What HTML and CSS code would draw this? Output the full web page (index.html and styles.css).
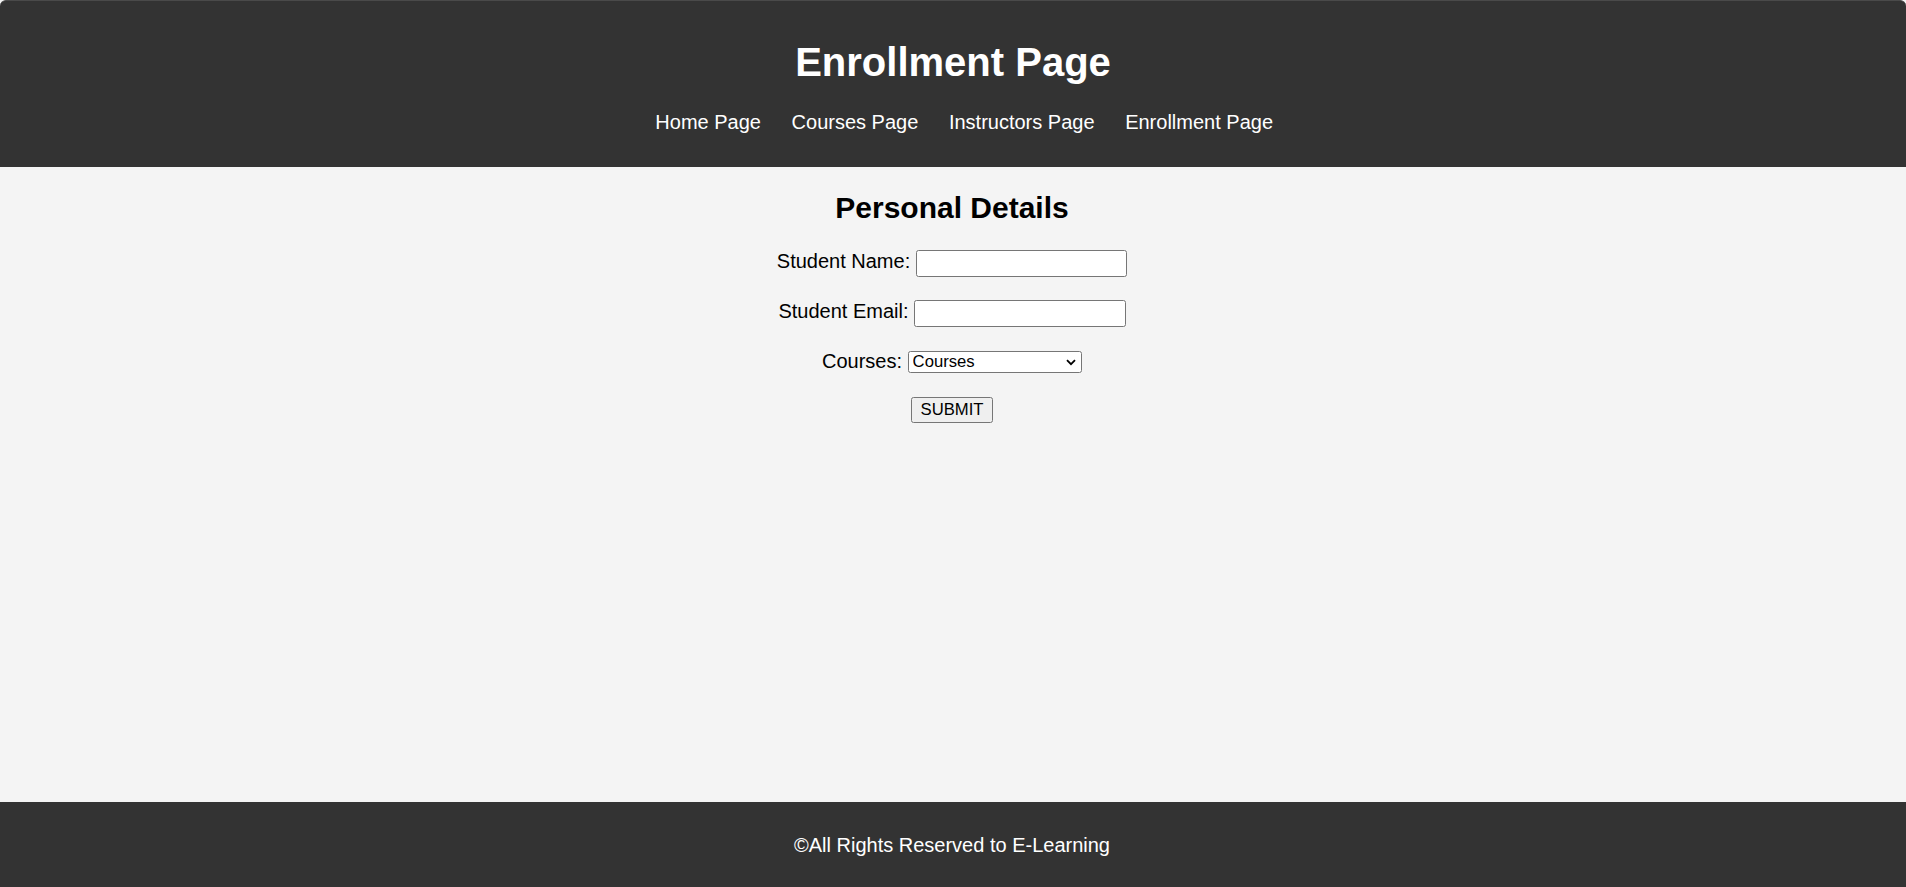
FILE: index.html
```html
<!DOCTYPE html>
<html lang="en">
<head>
<meta charset="utf-8">
<title>Enrollment Page</title>
<link rel="stylesheet" href="styles.css">
</head>
<body>
<header class="site-header">
  <h1 class="site-title">Enrollment Page</h1>
  <nav class="site-nav">
    <a class="nav-link" href="#">Home Page</a>
    <a class="nav-link" href="#">Courses Page</a>
    <a class="nav-link" href="#">Instructors Page</a>
    <a class="nav-link" href="#">Enrollment Page</a>
  </nav>
</header>
<main class="content">
  <h2 class="section-title">Personal Details</h2>
  <form class="enroll-form">
    <div class="field field-text">
      <label class="field-label" for="sname">Student Name:</label>
      <input class="text-input" id="sname" type="text">
    </div>
    <div class="field field-text">
      <label class="field-label" for="semail">Student Email:</label>
      <input class="text-input" id="semail" type="email">
    </div>
    <div class="field field-select">
      <label class="field-label" for="course">Courses:</label>
      <span class="select-wrap">
        <select class="course-select" id="course">
          <option>Courses</option>
        </select>
        <svg class="chevron" width="10" height="7" viewBox="0 0 10 7" aria-hidden="true"><path d="M1 1.2 L5 5.2 L9 1.2" fill="none" stroke="#000" stroke-width="1.8"/></svg>
      </span>
    </div>
    <button class="submit-btn" type="submit">SUBMIT</button>
  </form>
</main>
<footer class="site-footer">©All Rights Reserved to E-Learning</footer>
</body>
</html>
```

FILE: styles.css
```css
* {
  box-sizing: border-box;
}

html, body {
  margin: 0;
  padding: 0;
}

body {
  font-family: "Liberation Sans", Arial, sans-serif;
  background: #f4f4f4;
  color: #000;
  min-height: 100vh;
  display: flex;
  flex-direction: column;
}

.site-header {
  background: #333333;
  color: #fff;
  text-align: center;
  padding: 11px 0 13px;
  border-top: 1px solid #4a4a4a;
  border-radius: 6px 6px 0 0;
}

.site-title {
  margin: 27px 0 26px;
  font-size: 40px;
  line-height: 46px;
  font-weight: bold;
}

.site-nav {
  display: flex;
  justify-content: center;
  gap: 30.6px;
  padding-left: 22.4px;
  margin: 0 0 20px;
  font-size: 20px;
  line-height: 23px;
}

.nav-link {
  color: #fff;
  text-decoration: none;
}

.content {
  flex: 1;
  padding-top: 24px;
}

.section-title {
  margin: 0;
  padding-right: 2px;
  text-align: center;
  font-size: 30px;
  line-height: 34.5px;
  font-weight: bold;
}

.enroll-form {
  margin-top: 24px;
  padding-right: 2px;
  display: flex;
  flex-direction: column;
  align-items: center;
}

.field {
  display: flex;
  justify-content: center;
  align-items: flex-start;
  gap: 5.6px;
  margin-bottom: 20px;
}

.field-text {
  height: 30px;
}

.field-select {
  height: 27px;
}

.field-label {
  font-size: 20px;
  line-height: 23px;
}

.text-input {
  width: 211.4px;
  height: 26.7px;
  margin-top: 0.7px;
  border: 1px solid #767676;
  border-radius: 2.5px;
  background: #fff;
  padding: 0 3px;
  font-family: "Liberation Sans", Arial, sans-serif;
  font-size: 16.67px;
}

.select-wrap {
  position: relative;
  display: block;
  margin-top: 1.5px;
  height: 22px;
}

.course-select {
  -webkit-appearance: none;
  appearance: none;
  display: block;
  width: 174.4px;
  height: 22px;
  border: 1px solid #767676;
  border-radius: 2.5px;
  background: #fff;
  color: #000;
  padding: 0 0 0 4px;
  margin: 0;
  font-family: "Liberation Sans", Arial, sans-serif;
  font-size: 16.67px;
  line-height: 20px;
}

.chevron {
  position: absolute;
  left: 158px;
  top: 8px;
  pointer-events: none;
}

.submit-btn {
  height: 26px;
  width: 81.4px;
  padding: 0;
  border: 1px solid #767676;
  border-radius: 2.5px;
  background: #efefef;
  color: #000;
  font-family: "Liberation Sans", Arial, sans-serif;
  font-size: 16.67px;
  line-height: 19px;
}

.site-footer {
  background: #333333;
  color: #fff;
  text-align: center;
  font-size: 20px;
  line-height: 23px;
  padding: 32px 0 30px;
  padding-right: 2px;
}
```
